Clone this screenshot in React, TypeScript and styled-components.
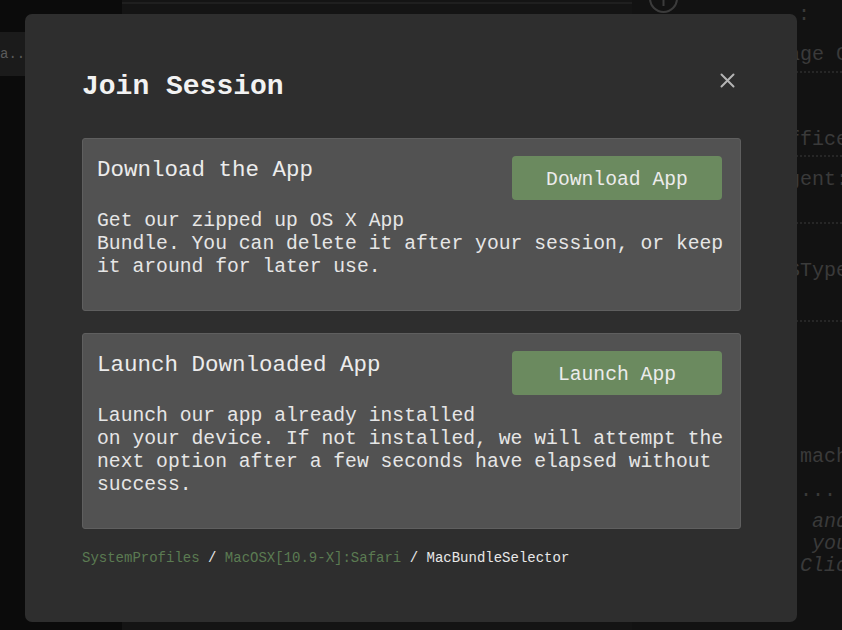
import React from "react";
import styled, { createGlobalStyle } from "styled-components";

const Global = createGlobalStyle`
  html, body { margin: 0; padding: 0; background: #121212; overflow: hidden; }
  body { font-family: "Liberation Mono", "Courier New", monospace; }
`;

const Page = styled.div`
  display: grid;
  grid-template-columns: 122px 510px 1fr;
  width: 842px;
  height: 630px;
  overflow: hidden;
`;

const Sidebar = styled.aside`
  background: #0b0b0b;
  padding-top: 32px;
`;

const SideItem = styled.div`
  height: 44px;
  background: #1b1b1b;
  color: #5a5a5a;
  font-size: 14px;
  line-height: 44px;
  white-space: nowrap;
`;

const Main = styled.main`
  background: #141414;
`;

const TopBar = styled.div`
  height: 2px;
  margin-top: 2px;
  background: #1f1f1f;
`;

const RightPanel = styled.section`
  background: #121212;
  display: flex;
  flex-direction: column;
  padding-left: 17px;
  position: relative;
  overflow: hidden;
`;

const IconWrap = styled.div`
  position: absolute;
  left: 16px;
  top: -17px;
  width: 31px;
  height: 31px;
`;

const Fields = styled.div`
  display: flex;
  flex-direction: column;
  padding-left: 127px;
  font-size: 20px;
  color: #3a3a3a;
  white-space: nowrap;
`;

const Label = styled.div<{ $mt: number; $indent?: number; $italic?: boolean }>`
  margin-top: ${(p) => p.$mt}px;
  padding-left: ${(p) => p.$indent ?? 0}px;
  line-height: ${(p) => (p.$italic ? 22 : 24)}px;
  font-style: ${(p) => (p.$italic ? "italic" : "normal")};
`;

const Dotted = styled.div<{ $mt: number }>`
  margin-top: ${(p) => p.$mt}px;
  border-bottom: 2px dotted #262626;
`;

const Overlay = styled.div`
  position: fixed;
  inset: 0;
  padding: 14px 0 0 25px;
`;

const Modal = styled.div`
  width: 772px;
  box-sizing: border-box;
  background: #2e2e2e;
  border-radius: 7px;
  padding: 57px 56px 56px 57px;
  display: flex;
  flex-direction: column;
`;

const Header = styled.div`
  display: flex;
  justify-content: space-between;
  align-items: flex-start;
`;

const Title = styled.h1`
  margin: 0;
  font-family: "Liberation Mono", "Courier New", monospace;
  font-weight: bold;
  font-size: 28px;
  line-height: 32px;
  color: #f2f2f2;
`;

const Close = styled.button`
  border: 0;
  background: none;
  padding: 0;
  margin: 2px 6px 0 0;
  width: 15px;
  height: 15px;
  cursor: pointer;
  display: block;
`;

const Card = styled.div<{ $mt: number }>`
  margin-top: ${(p) => p.$mt}px;
  background: #525252;
  border: 1px solid #5f5f5f;
  border-radius: 3px;
  padding: 17px 18px 31px 14px;
  color: #e6e6e6;
`;

const CardHead = styled.div`
  display: flex;
  justify-content: space-between;
  align-items: flex-start;
`;

const CardTitle = styled.h2`
  margin: 2px 0 0 0;
  font-weight: normal;
  font-family: "Liberation Mono", "Courier New", monospace;
  font-size: 22.5px;
  line-height: 25px;
  color: #ececec;
`;

const ActionButton = styled.button`
  width: 210px;
  height: 44px;
  border: 0;
  border-radius: 4px;
  background: #6b8a5f;
  color: #ececec;
  font-family: "Liberation Mono", "Courier New", monospace;
  font-size: 19.7px;
  cursor: pointer;
  display: flex;
  align-items: center;
  justify-content: center;
  padding: 3px 0 0 0;
`;

const Body = styled.p`
  margin: 10px 0 0 0;
  font-size: 19.7px;
  line-height: 23px;
  white-space: nowrap;
  color: #e6e6e6;
`;

const Crumbs = styled.nav`
  margin-top: 21px;
  font-size: 14px;
  line-height: 16px;
  color: #e8e8e8;
  white-space: pre;
`;

const CrumbLink = styled.span`
  color: #5b7b52;
`;

export default function App() {
  return (
    <>
      <Global />
      <Page>
        <Sidebar>
          <SideItem>a...</SideItem>
        </Sidebar>
        <Main>
          <TopBar />
        </Main>
        <RightPanel>
          <IconWrap>
            <svg width="31" height="31" viewBox="0 0 31 31">
              <circle cx="15.5" cy="15.5" r="13.5" fill="none" stroke="#3b3b3b" strokeWidth="2" />
              <line x1="15.5" y1="8" x2="15.5" y2="23" stroke="#3b3b3b" strokeWidth="2" />
            </svg>
          </IconWrap>
          <Fields>
            <Label $mt={3} $indent={22}>:</Label>
            <Label $mt={16}>Page Count</Label>
            <Dotted $mt={4} />
            <Label $mt={55}>Office</Label>
            <Dotted $mt={3} />
            <Label $mt={11}>Agent:</Label>
            <Dotted $mt={30} />
            <Label $mt={35}>OSType</Label>
            <Dotted $mt={37} />
            <Label $mt={123}>a machine</Label>
            <Label $mt={10}>.....</Label>
            <Label $mt={8} $italic $indent={36}>
              and
              <br />
              your
            </Label>
            <Label $mt={0} $italic $indent={24}>
              Click
            </Label>
          </Fields>
        </RightPanel>
      </Page>
      <Overlay>
        <Modal>
          <Header>
            <Title>Join Session</Title>
            <Close aria-label="Close">
              <svg width="15" height="15" viewBox="0 0 15 15">
                <path d="M1.5 1.5 L13.5 13.5 M13.5 1.5 L1.5 13.5" stroke="#b4b4b4" strokeWidth="2" strokeLinecap="round" />
              </svg>
            </Close>
          </Header>
          <Card $mt={35}>
            <CardHead>
              <CardTitle>Download the App</CardTitle>
              <ActionButton>Download App</ActionButton>
            </CardHead>
            <Body>
              Get our zipped up OS X App
              <br />
              Bundle. You can delete it after your session, or keep
              <br />
              it around for later use.
            </Body>
          </Card>
          <Card $mt={22}>
            <CardHead>
              <CardTitle>Launch Downloaded App</CardTitle>
              <ActionButton>Launch App</ActionButton>
            </CardHead>
            <Body>
              Launch our app already installed
              <br />
              on your device. If not installed, we will attempt the
              <br />
              next option after a few seconds have elapsed without
              <br />
              success.
            </Body>
          </Card>
          <Crumbs>
            <CrumbLink>SystemProfiles</CrumbLink>
            {" / "}
            <CrumbLink>MacOSX[10.9-X]:Safari</CrumbLink>
            {" / "}
            MacBundleSelector
          </Crumbs>
        </Modal>
      </Overlay>
    </>
  );
}
